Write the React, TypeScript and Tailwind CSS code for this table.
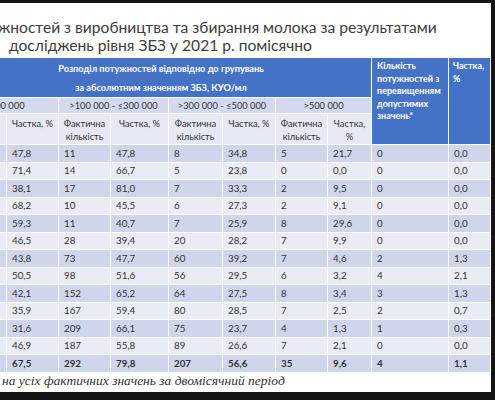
const rows: string[][] = [
  ["47,8", "11", "47,8", "8", "34,8", "5", "21,7", "0", "0,0"],
  ["71,4", "14", "66,7", "5", "23,8", "0", "0,0", "0", "0,0"],
  ["38,1", "17", "81,0", "7", "33,3", "2", "9,5", "0", "0,0"],
  ["68,2", "10", "45,5", "6", "27,3", "2", "9,1", "0", "0,0"],
  ["59,3", "11", "40,7", "7", "25,9", "8", "29,6", "0", "0,0"],
  ["46,5", "28", "39,4", "20", "28,2", "7", "9,9", "0", "0,0"],
  ["43,8", "73", "47,7", "60", "39,2", "7", "4,6", "2", "1,3"],
  ["50,5", "98", "51,6", "56", "29,5", "6", "3,2", "4", "2,1"],
  ["42,1", "152", "65,2", "64", "27,5", "8", "3,4", "3", "1,3"],
  ["35,9", "167", "59,4", "80", "28,5", "7", "2,5", "2", "0,7"],
  ["31,6", "209", "66,1", "75", "23,7", "4", "1,3", "1", "0,3"],
  ["46,9", "187", "55,8", "89", "26,6", "7", "2,1", "0", "0,0"],
];

const total = ["67,5", "292", "79,8", "207", "56,6", "35", "9,6", "4", "1,1"];

const widths = [56, 52, 52, 58, 54, 53, 52, 44, 77, 42];

export default function App() {
  return (
    <div className="w-[495px] h-[400px] bg-[#151515] pt-[3px] pr-[4px] overflow-hidden">
      <div className="h-[389px] bg-white overflow-hidden font-['Lato','Noto_Sans',sans-serif]">
        {/* title, cropped on the left like the slide */}
        <div className="pt-[15px] text-[15.6px] leading-[18px] text-[#3d3d3d] whitespace-nowrap">
          <div className="-ml-[2px]">жностей з виробництва та збирання молока за результатами</div>
          <div className="pl-[9px]">досліджень рівня ЗБЗ у 2021 р. помісячно</div>
        </div>

        <table className="mt-[3px] -ml-[50px] w-[540px] table-fixed border-collapse text-[#333]">
          <colgroup>
            {widths.map((w, i) => (
              <col key={i} style={{ width: w }} />
            ))}
          </colgroup>
          <thead>
            <tr className="h-[39px]">
              <th
                colSpan={8}
                className="bg-[#4472C4] border-[1.5px] border-white align-top pt-[1px] text-white font-bold text-[9.2px] leading-[19px] text-center"
              >
                <div>Розподіл потужностей відповідно до групувань</div>
                <div>за абсолютним значенням ЗБЗ, КУО/мл</div>
              </th>
              <th
                rowSpan={3}
                className="bg-[#4472C4] border-[1.5px] border-white align-top pt-[2px] pl-[5px] text-left text-white font-bold text-[9px] leading-[12.5px]"
              >
                Кількість
                <br />
                потужностей з
                <br />
                перевищенням
                <br />
                допустимих
                <br />
                значень*
              </th>
              <th
                rowSpan={3}
                className="bg-[#4472C4] border-[1.5px] border-white align-top pt-[2px] pl-[4px] text-left text-white font-bold text-[9px] leading-[12.5px]"
              >
                Частка,
                <br />%
              </th>
            </tr>
            <tr className="h-[16px] bg-[#D3D9EE] text-[9.3px] font-normal">
              <td colSpan={2} className="border-[1.5px] border-white text-center">≤100 000</td>
              <td colSpan={2} className="border-[1.5px] border-white text-center">&gt;100 000 - ≤300 000</td>
              <td colSpan={2} className="border-[1.5px] border-white text-center">&gt;300 000 - ≤500 000</td>
              <td colSpan={2} className="border-[1.5px] border-white text-center">&gt;500 000</td>
            </tr>
            <tr className="h-[31px] bg-[#E6E9F4] text-[9.3px] leading-[13px]">
              <td className="border-[1.5px] border-white"></td>
              <td className="border-[1.5px] border-white text-center align-top pt-[3px]">Частка, %</td>
              <td className="border-[1.5px] border-white text-center align-top pt-[3px]">Фактична<br />кількість</td>
              <td className="border-[1.5px] border-white text-center align-top pt-[3px]">Частка, %</td>
              <td className="border-[1.5px] border-white text-center align-top pt-[3px]">Фактична<br />кількість</td>
              <td className="border-[1.5px] border-white text-center align-top pt-[3px]">Частка, %</td>
              <td className="border-[1.5px] border-white text-center align-top pt-[3px]">Фактична<br />кількість</td>
              <td className="border-[1.5px] border-white text-center align-top pt-[3px]">Частка,<br />%</td>
            </tr>
          </thead>
          <tbody className="text-[9.8px]">
            {rows.map((r, i) => (
              <tr key={i} className={`h-[17.5px] ${i % 2 === 0 ? "bg-[#CFD5EA]" : "bg-[#E9EBF5]"}`}>
                <td className="border-[1.5px] border-white"></td>
                {r.map((v, j) => (
                  <td key={j} className="border-[1.5px] border-white pl-[5px] text-left">
                    {v}
                  </td>
                ))}
              </tr>
            ))}
            <tr className="h-[17.5px] bg-[#CFD5EA] font-bold">
              <td className="border-[1.5px] border-white"></td>
              {total.map((v, j) => (
                <td key={j} className="border-[1.5px] border-white pl-[5px] text-left">
                  {v}
                </td>
              ))}
            </tr>
          </tbody>
        </table>

        <div className="pl-[2px] whitespace-nowrap font-['Liberation_Serif',serif] italic text-[13.5px] leading-[16px] text-[#333]">
          на усіх фактичних значень за двомісячний період
        </div>
      </div>
    </div>
  );
}
